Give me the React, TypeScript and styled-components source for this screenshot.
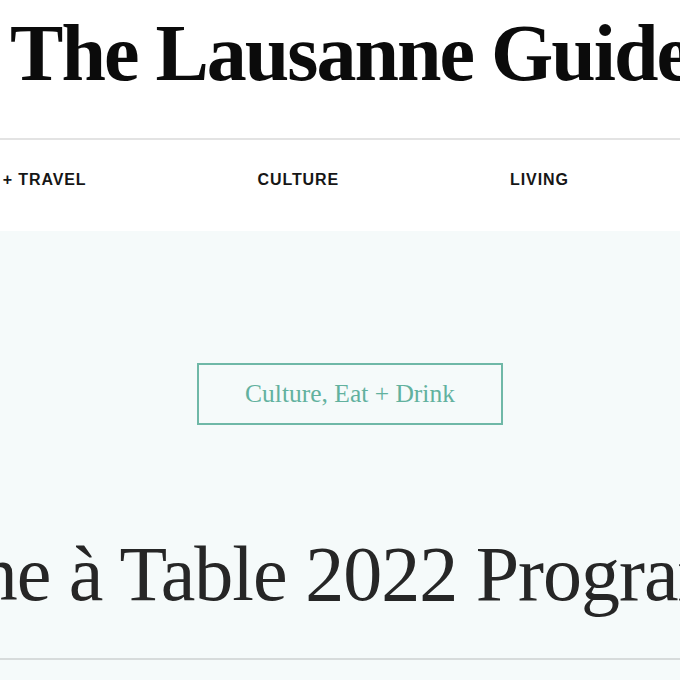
import React from 'react';
import styled, { createGlobalStyle } from 'styled-components';

const GlobalStyle = createGlobalStyle`
  html, body {
    margin: 0;
    padding: 0;
    overflow: hidden;
    background: #ffffff;
  }
`;

const navItems = ['STAY + TRAVEL', 'CULTURE', 'LIVING', 'SHOP'];

const App: React.FC = () => {
  return (
    <>
      <GlobalStyle />
      <S.Page>
        <S.Masthead>
          <S.Logo>The Lausanne Guide</S.Logo>
        </S.Masthead>
        <S.Nav>
          <S.NavList>
            {navItems.map((item) => (
              <S.NavItem key={item}>{item}</S.NavItem>
            ))}
          </S.NavList>
        </S.Nav>
        <S.Hero>
          <S.Tag>Culture, Eat + Drink</S.Tag>
          <S.Headline>Lausanne à Table 2022 Programme</S.Headline>
        </S.Hero>
      </S.Page>
    </>
  );
};

export default App;

const S = {
  Page: styled.div`
    width: 700px;
    height: 680px;
    display: flex;
    flex-direction: column;
  `,

  Masthead: styled.header`
    height: 125px;
    padding-top: 13px;
    display: flex;
    justify-content: center;
    border-bottom: 2px solid #e3e3e3;
  `,

  Logo: styled.h1`
    margin: 0;
    flex-shrink: 0;
    white-space: nowrap;
    font-family: 'Liberation Serif', 'DejaVu Serif', serif;
    font-weight: 700;
    font-size: 80px;
    line-height: 1;
    letter-spacing: -2px;
    color: #0b0b0b;
  `,

  Nav: styled.nav`
    height: 91px;
    box-sizing: border-box;
    padding-top: 31px;
    background: #ffffff;
  `,

  NavList: styled.ul`
    display: flex;
    gap: 171px;
    margin: 0 0 0 -46px;
    padding: 0;
    list-style: none;
    white-space: nowrap;
  `,

  NavItem: styled.li`
    flex-shrink: 0;
    font-family: 'Liberation Sans', Arial, sans-serif;
    font-weight: 700;
    font-size: 16px;
    line-height: 18px;
    letter-spacing: 0.9px;
    color: #161616;
  `,

  Hero: styled.section`
    flex: 1;
    display: flex;
    flex-direction: column;
    align-items: center;
    padding-top: 132px;
    background: #f5fafa;
  `,

  Tag: styled.div`
    height: 62px;
    box-sizing: border-box;
    padding: 0 46px;
    border: 2px solid #6fb8a7;
    font-family: 'Liberation Serif', 'DejaVu Serif', serif;
    font-size: 25.5px;
    line-height: 58px;
    color: #62b19e;
    white-space: nowrap;
  `,

  Headline: styled.h2`
    margin: 110px 0 0;
    padding: 0 110px 45px 0;
    align-self: stretch;
    display: flex;
    justify-content: center;
    border-bottom: 2px solid #d7dbdb;
    font-family: 'Liberation Serif', 'DejaVu Serif', serif;
    font-weight: 400;
    font-size: 78px;
    line-height: 1;
    letter-spacing: -1px;
    color: #262626;
    white-space: nowrap;
  `,
};
